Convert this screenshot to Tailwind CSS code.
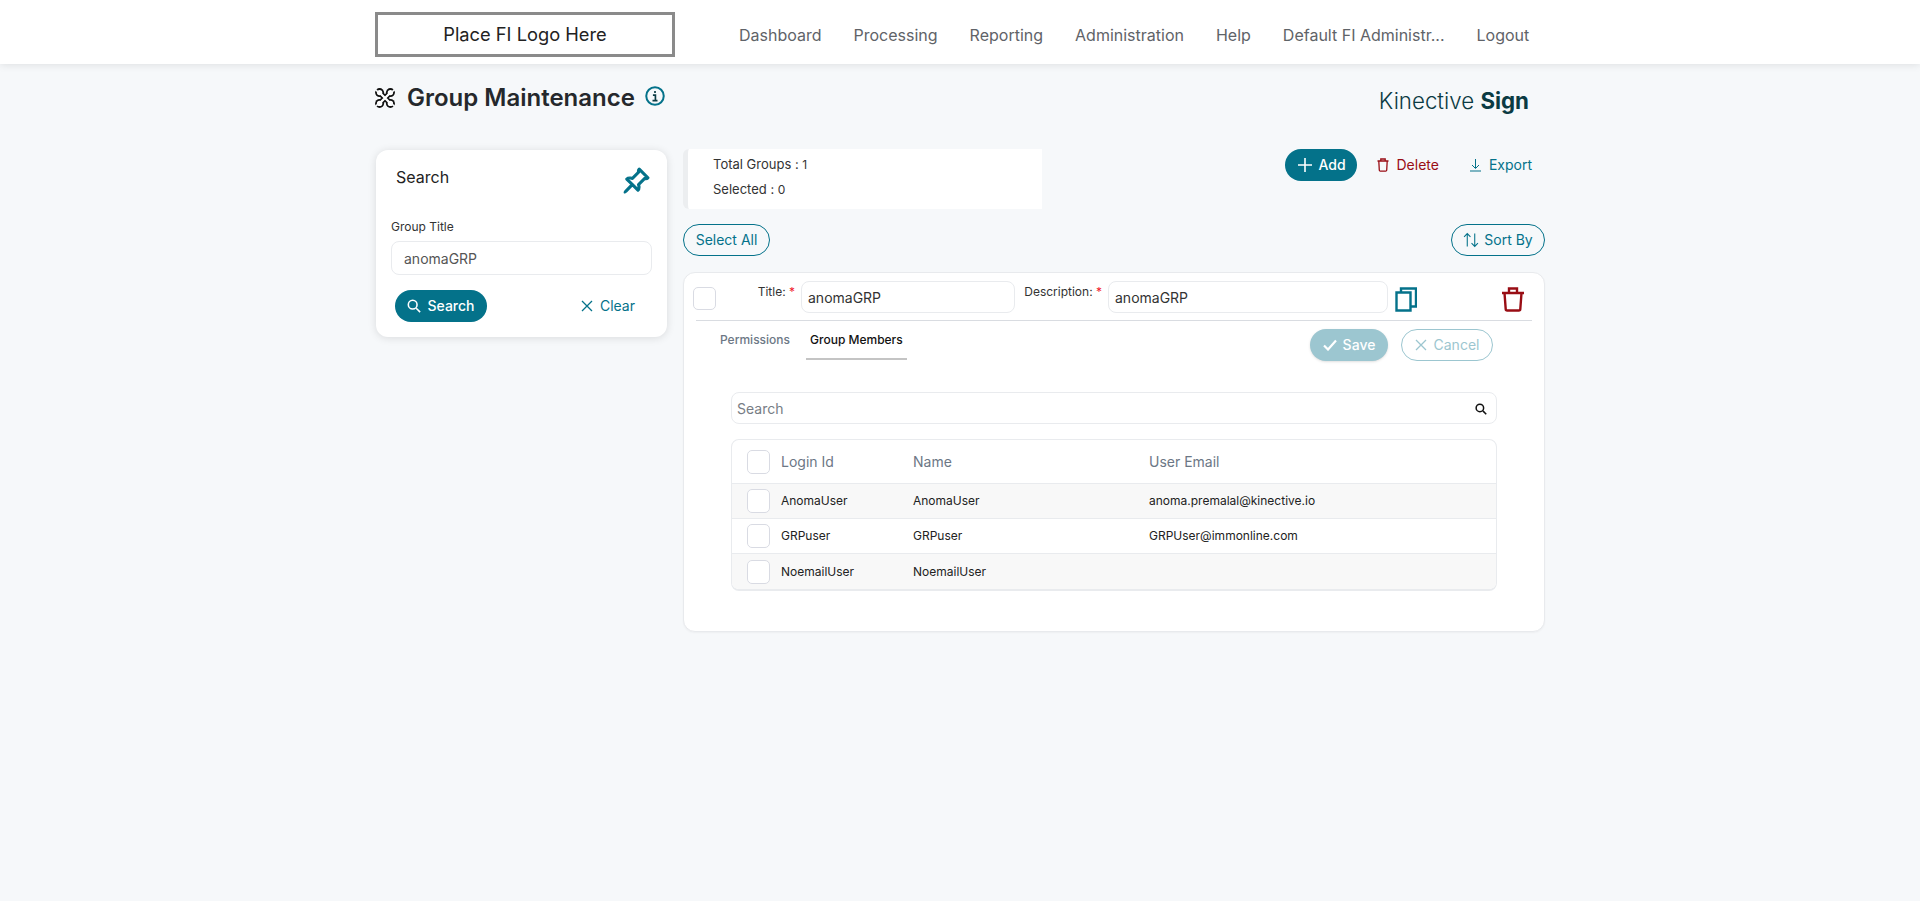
<!DOCTYPE html>
<html lang="en">
<head>
  <meta charset="UTF-8" />
  <title>Group Maintenance</title>
  <script src="https://cdn.jsdelivr.net/npm/@tailwindcss/browser@4"></script>
</head>
<body class="bg-[#f6f8fa] font-[Inter,sans-serif] text-[#212529] min-h-[901px]">

  <!-- Header -->
  <header class="bg-white h-16 shadow-[0_1px_8px_rgba(0,0,0,0.1)]">
    <div class="w-[1170px] ml-[375px] h-full flex items-center pt-[5px]">
      <div class="w-[300px] h-[45px] border-[3px] border-[#8a8a8a] flex items-center justify-center text-[18.3px] text-[#222]">Place FI Logo Here</div>
      <nav class="flex gap-8 ml-[64px] text-[16px] text-[#5f6368]">
        <a>Dashboard</a>
        <a>Processing</a>
        <a>Reporting</a>
        <a>Administration</a>
        <a>Help</a>
        <a>Default FI Administr...</a>
        <a>Logout</a>
      </nav>
    </div>
  </header>

  <div class="w-[1170px] ml-[375px]">
    <!-- Title row -->
    <div class="h-[85px] flex justify-between pr-[16px]">
      <div class="flex items-center h-[67px]">
        <svg class="w-5 h-5" viewBox="0 0 20 20" fill="none">
          <g stroke="#111" stroke-width="5.4"><path d="M5 5l10 10M15 5L5 15"/></g>
          <g fill="#111"><circle cx="4.6" cy="4.6" r="4.5"/><circle cx="15.4" cy="4.6" r="4.5"/><circle cx="4.6" cy="15.4" r="4.5"/><circle cx="15.4" cy="15.4" r="4.5"/></g>
          <g stroke="#fff" stroke-width="2.4"><path d="M5 5l10 10M15 5L5 15"/></g>
          <g fill="#fff"><circle cx="4.6" cy="4.6" r="2.7"/><circle cx="15.4" cy="4.6" r="2.7"/><circle cx="4.6" cy="15.4" r="2.7"/><circle cx="15.4" cy="15.4" r="2.7"/></g>
          <g stroke="#f6f8fa" stroke-width="1.6"><path d="M3.5 4.5L0 1M16.5 4.5L20 1M3.5 15.5L0 19M16.5 15.5L20 19"/></g>
        </svg>
        <h1 class="ml-3 text-2xl font-semibold text-[#25282c]">Group Maintenance</h1>
        <svg class="ml-[10px] w-5 h-5 -mt-1" viewBox="0 0 24 24" fill="none"><circle cx="12" cy="12" r="10.5" stroke="#04728a" stroke-width="2.4"/><path d="M12 6v2.4M9.5 11H12.5v6M9 17.5h6" stroke="#0b3b43" stroke-width="2"/></svg>
      </div>
      <div class="text-[22.3px] font-light text-[#0b3b43] pt-[20px]">Kinective <span class="font-bold">Sign</span></div>
    </div>

    <div class="flex items-start gap-4">
      <!-- Search card -->
      <aside class="w-[291px] ml-[1px] mt-[1px] h-[187px] bg-white rounded-xl shadow-[0_1px_8px_rgba(0,0,0,0.12)] px-[15px] pt-[15px]">
        <div class="flex justify-between items-start pl-[5px] pr-[3px]">
          <span class="text-[16px] text-[#222]">Search</span>
          <svg class="w-[28px] h-[28px] mt-[2px] -mr-[1px]" viewBox="0 0 16 16" fill="#04728a" stroke="#04728a" stroke-width="0.8"><path d="M9.828.722a.5.5 0 0 1 .354.146l4.95 4.95a.5.5 0 0 1 0 .707c-.48.48-1.072.588-1.503.588-.177 0-.335-.018-.46-.039l-3.134 3.134a5.927 5.927 0 0 1 .16 1.013c.046.702-.032 1.687-.72 2.375a.5.5 0 0 1-.707 0l-2.829-2.828-3.182 3.182c-.195.195-1.219.902-1.414.707-.195-.195.512-1.22.707-1.414l3.182-3.182-2.828-2.829a.5.5 0 0 1 0-.707c.688-.688 1.673-.767 2.375-.72a5.922 5.922 0 0 1 1.013.16l3.134-3.133a2.772 2.772 0 0 1-.04-.461c0-.43.108-1.022.589-1.503a.5.5 0 0 1 .353-.146zm.122 2.112v-.002.002zm0-.002v.002a.5.5 0 0 1-.122.51L6.293 6.878a.5.5 0 0 1-.511.12H5.78l-.014-.004a4.507 4.507 0 0 0-.288-.076 4.922 4.922 0 0 0-.765-.116c-.422-.028-.836.008-1.175.15l5.51 5.509c.141-.34.177-.753.149-1.175a4.924 4.924 0 0 0-.192-1.054l-.004-.013v-.001a.5.5 0 0 1 .12-.512l3.536-3.535a.5.5 0 0 1 .532-.115l.096.022c.087.017.208.034.344.034.114 0 .23-.011.343-.04L9.927 2.028c-.029.113-.04.23-.04.343a1.779 1.779 0 0 0 .062.46z"/></svg>
        </div>
        <label class="block text-xs text-[#333] mt-[24px]">Group Title</label>
        <input value="anomaGRP" class="block w-[261px] h-[34px] mt-[6px] rounded-lg border border-[#e9ebee] px-[12px] text-sm text-[#555]" />
        <div class="flex items-center justify-between mt-[15px] pl-[4px] pr-[17px]">
          <button class="h-8 w-[92px] rounded-full bg-[#04728a] text-white text-sm font-medium flex items-center justify-center gap-[6px]">
            <svg class="w-[14px] h-[14px]" viewBox="0 0 16 16" fill="none" stroke="#fff" stroke-width="1.8"><circle cx="6.5" cy="6.5" r="5"/><path d="M10.5 10.5l4.5 4.5"/></svg>
            Search
          </button>
          <button class="flex items-center gap-[7px] text-sm text-[#04728a]">
            <svg class="w-[12px] h-[12px]" viewBox="0 0 12 12" fill="none" stroke="#04728a" stroke-width="1.3"><path d="M1 1l10 10M11 1L1 11"/></svg>
            Clear
          </button>
        </div>
      </aside>

      <!-- Main column -->
      <main class="w-[862px]">
        <div class="flex justify-between items-start h-[75px]">
          <div class="w-[359px] h-[60px] bg-white rounded-l-md border-l-[5px] border-[#eceef0] pl-[25px] pt-[3px] text-[13px] text-[#333]">
            <div class="leading-[25px]">Total Groups : <span class="text-xs">1</span></div>
            <div class="leading-[25px]">Selected : <span class="text-xs">0</span></div>
          </div>
          <div class="flex items-center text-sm mr-[13px]">
            <button class="h-8 w-[72px] rounded-full bg-[#04728a] text-white font-medium flex items-center justify-center gap-[5px]">
              <svg class="w-4 h-4" viewBox="0 0 16 16" fill="none" stroke="#fff" stroke-width="1.6"><path d="M8 1v14M1 8h14"/></svg>
              Add
            </button>
            <button class="ml-[20px] flex items-center gap-[7px] text-[#990d14]">
              <svg class="w-[12px] h-[14px]" viewBox="0 0 12 14" fill="none" stroke="#990d14" stroke-width="1.3"><path d="M.5 3h11M3.8 3V1h4.4v2M1.8 3l.5 9.2a1 1 0 0 0 1 .9h5.4a1 1 0 0 0 1-.9l.5-9.2"/></svg>
              Delete
            </button>
            <button class="ml-[30px] flex items-center gap-[7px] text-[#04728a]">
              <svg class="w-[13px] h-[14px]" viewBox="0 0 13 14" fill="none" stroke="#04728a" stroke-width="1"><path d="M6.5 1v9M3 7l3.5 3.5L10 7M1 13h11"/></svg>
              Export
            </button>
          </div>
        </div>

        <div class="flex justify-between mb-[16px]">
          <button class="h-8 w-[87px] rounded-full border border-[#04728a] text-[#04728a] text-sm">Select All</button>
          <button class="h-8 w-[94px] rounded-full border border-[#04728a] text-[#04728a] text-sm flex items-center justify-center gap-[5px]">
            <svg class="w-4 h-4" viewBox="0 0 15 14" fill="none" stroke="#04728a" stroke-width="1"><path d="M4 13V1M1 4l3-3 3 3M11 1v12M8 10l3 3 3-3"/></svg>
            Sort By
          </button>
        </div>

        <!-- Group card -->
        <section class="w-[862px] h-[360px] bg-white rounded-xl border border-[#e8eaed] shadow-[0_1px_2px_rgba(0,0,0,0.04)] pl-3 pr-[12px]">
          <div class="flex items-start h-[48px] border-b border-[#d9dce1] pt-[8px]">
            <span class="w-[23px] h-[23px] mt-[6px] -ml-[3px] rounded-[5px] border border-[#d9dbe3] bg-white"></span>
            <label class="w-[79px] text-right text-xs mt-[3px] text-[#333]">Title: <span class="text-[#f0202c]">*</span></label>
            <input value="anomaGRP" class="w-[214px] h-8 ml-[6px] rounded-lg border border-[#e9ebee] px-[6px] text-sm text-[#333]" />
            <label class="w-[87px] text-right text-xs mt-[3px] text-[#333]">Description: <span class="text-[#f0202c]">*</span></label>
            <input value="anomaGRP" class="w-[280px] h-8 ml-[6px] rounded-lg border border-[#e9ebee] px-[6px] text-sm text-[#333]" />
            <svg class="w-[22px] h-[25px] ml-[7px] mt-[6px]" viewBox="0 0 22 25" fill="none" stroke="#04728a" stroke-width="2.4"><path d="M1.5 5.5h14v18h-14zM6 5V1.5h15v18h-5"/></svg>
            <svg class="w-[22px] h-[25px] ml-[85px] mt-[6px]" viewBox="0 0 22 25" fill="none" stroke="#990d14" stroke-width="2.4"><path d="M0 6h22M7 6V1.5h8V6M2.5 6l1.2 16a1.5 1.5 0 0 0 1.5 1.5h11.6a1.5 1.5 0 0 0 1.5-1.5L19.5 6"/></svg>
          </div>

          <div class="flex h-[71px]">
            <div class="flex items-start text-xs font-medium pl-[24px]">
              <span class="mt-[11px] text-[#6c7785]">Permissions</span>
              <span class="ml-[16px] px-[4px] pt-[11px] h-[39px] border-b-[2px] border-[#c4c4c4] text-[#111]">Group Members</span>
            </div>
            <div class="flex ml-auto gap-[13px] pt-[8px] pr-[39px] text-sm">
              <button class="h-8 w-[78px] rounded-full bg-[#9cc6d0] text-white font-medium flex items-center justify-center gap-[6px] shadow-sm">
                <svg class="w-[14px] h-[12px]" viewBox="0 0 14 12" fill="none" stroke="#fff" stroke-width="2.2"><path d="M1 6.5L5 10.5 13 1.5"/></svg>
                Save
              </button>
              <button class="h-8 w-[92px] rounded-full border border-[#9cc6d0] text-[#9cc6d0] flex items-center justify-center gap-[7px]">
                <svg class="w-[12px] h-[12px]" viewBox="0 0 12 12" fill="none" stroke="#9cc6d0" stroke-width="1.3"><path d="M1 1l10 10M11 1L1 11"/></svg>
                Cancel
              </button>
            </div>
          </div>

          <div class="ml-[35px] w-[766px]">
            <div class="h-8 rounded-lg border border-[#e9ebee] flex items-center justify-between pl-[5px] pr-[9px] pt-[1px] text-sm text-[#777d85]">
              <span>Search</span>
              <svg class="w-[12px] h-[12px]" viewBox="0 0 16 16" fill="none" stroke="#111" stroke-width="2"><circle cx="6.5" cy="6.5" r="5"/><path d="M10.5 10.5l4.5 4.5"/></svg>
            </div>

            <div class="mt-[15px] rounded-lg border border-[#e9ebee] border-b-[2px] overflow-hidden">
              <div class="grid grid-cols-[34px_132px_236px_1fr] items-center h-[44px] pl-[15px] text-sm text-[#6c7785] border-b border-[#e9ebee]">
                <span class="w-[23px] h-[24px] rounded-[5px] border border-[#d9dbe3]"></span><span>Login Id</span><span>Name</span><span>User Email</span>
              </div>
              <div class="grid grid-cols-[34px_132px_236px_1fr] items-center h-[35px] pl-[15px] text-xs text-[#222] bg-[#f8f8f8] border-b border-[#e9ebee]">
                <span class="w-[23px] h-[24px] rounded-[5px] border border-[#d9dbe3] bg-white"></span><span>AnomaUser</span><span>AnomaUser</span><span>anoma.premalal@kinective.io</span>
              </div>
              <div class="grid grid-cols-[34px_132px_236px_1fr] items-center h-[35px] pl-[15px] text-xs text-[#222] border-b border-[#e9ebee]">
                <span class="w-[23px] h-[24px] rounded-[5px] border border-[#d9dbe3] bg-white"></span><span>GRPuser</span><span>GRPuser</span><span>GRPUser@immonline.com</span>
              </div>
              <div class="grid grid-cols-[34px_132px_236px_1fr] items-center h-[35px] pl-[15px] text-xs text-[#222] bg-[#f8f8f8]">
                <span class="w-[23px] h-[24px] rounded-[5px] border border-[#d9dbe3] bg-white"></span><span>NoemailUser</span><span>NoemailUser</span><span></span>
              </div>
            </div>
          </div>
        </section>
      </main>
    </div>
  </div>
</body>
</html>
